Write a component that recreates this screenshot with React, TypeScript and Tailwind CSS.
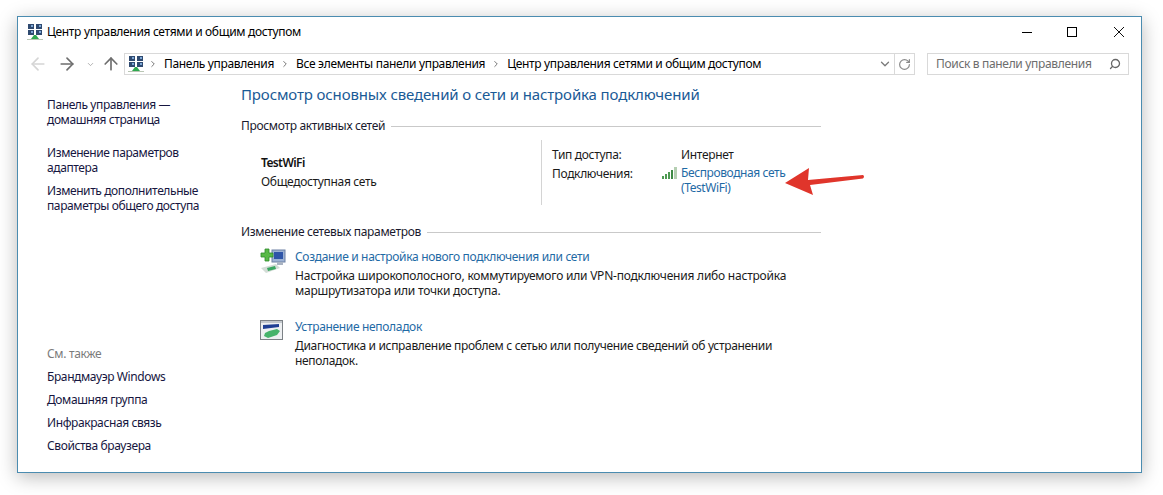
import { ArrowLeft, ArrowRight, ArrowUp, ChevronDown, ChevronRight, RotateCw, Search } from 'lucide-react'

function NetworkIcon() {
  return (
    <svg width="16" height="16" viewBox="0 0 16 16" className="shrink-0">
      <rect x="1" y="0" width="6" height="5" fill="#2f4a70" />
      <rect x="9" y="0" width="6" height="5" fill="#2f4a70" />
      <rect x="4" y="1" width="2" height="2" fill="#7fa8d6" />
      <rect x="12" y="1" width="2" height="2" fill="#7fa8d6" />
      <rect x="1" y="6" width="6" height="5" fill="#2f4a70" />
      <rect x="9" y="6" width="6" height="5" fill="#2f4a70" />
      <rect x="4" y="7" width="2" height="2" fill="#7fa8d6" />
      <rect x="12" y="7" width="2" height="2" fill="#7fa8d6" />
      <path d="M4 15 L7 11 H9 L12 15 Z" fill="#2fa84f" />
      <rect x="0" y="15" width="16" height="1" fill="#b9c6b4" />
    </svg>
  )
}

function SignalIcon() {
  return (
    <svg width="16" height="12" viewBox="0 0 16 12" className="shrink-0">
      <rect x="0" y="9" width="2" height="3" fill="#4e9a52" />
      <rect x="3" y="7" width="2" height="5" fill="#4e9a52" />
      <rect x="6" y="5" width="2" height="7" fill="#4e9a52" />
      <rect x="9" y="3" width="2" height="9" fill="#3f8a45" />
      <rect x="12" y="0" width="3" height="12" fill="#b5cfb2" />
    </svg>
  )
}

function AddConnectionIcon() {
  return (
    <svg width="26" height="26" viewBox="0 0 26 26" className="shrink-0">
      <rect x="12" y="2" width="13" height="12" fill="#9db2d4" stroke="#6d80a3" />
      <rect x="14" y="4" width="9" height="7" fill="#2f55a8" />
      <rect x="17" y="14" width="6" height="3" fill="#a9b3c2" />
      <path d="M5 1 H9 V5 H13 V9 H9 V13 H5 V9 H1 V5 H5 Z" fill="#59b947" stroke="#2f8a2c" strokeWidth="0.8" />
      <path d="M1 20 L16 16 L20 20 L6 25 Z" fill="#d3dcd6" />
      <path d="M7 20 L15 18 L16 21 L8 23 Z" fill="#3aa761" />
    </svg>
  )
}

function TroubleshootIcon() {
  return (
    <svg width="23" height="20" viewBox="0 0 23 20" className="shrink-0">
      <rect x="0.5" y="0.5" width="22" height="19" fill="#eef0f2" stroke="#7c8186" />
      <rect x="1" y="1" width="21" height="2" fill="#c4c8cc" />
      <path d="M3 5 L19 4 V7 L3 9 Z" fill="#1f3f94" />
      <path d="M5 13 L9 11 L17 9 L20 11 L17 15 L8 18 L4 16 Z" fill="#46b36b" />
    </svg>
  )
}

function RedArrow() {
  return (
    <svg
      width="82"
      height="32"
      viewBox="0 0 82 32"
      className="absolute left-[766px] top-[149px]"
    >
      <path
        d="M1 17 L25 2 L24 14 L79 9 Q81 10.500 79 12.500 L26 19 L29 29 Z"
        fill="#e0352b"
      />
    </svg>
  )
}

function SectionHeading({ title }: { title: string }) {
  return (
    <div className="flex h-[16px] items-center gap-[6px]">
      <span className="whitespace-nowrap text-[#1a1a2e]">{title}</span>
      <div className="h-px flex-1 bg-[#c9c9c9]" />
    </div>
  )
}

const sideLinkClass = 'block text-[#16163f] leading-[15px] tracking-[-0.4px]'

export default function App() {
  return (
    <div className="h-[495px] w-[1163px] overflow-hidden bg-white pl-[17px] pt-[16px] font-['Noto_Sans',sans-serif] text-[12px] tracking-[-0.33px] text-[#1a1a1a]">
      <div className="relative flex h-[457px] w-[1125px] flex-col border border-[#4b8cb0] bg-white shadow-[0_4px_18px_rgba(0,0,0,0.28)]">
        <div className="flex h-[30px] shrink-0 items-center pl-[9px]">
          <NetworkIcon />
          <span className="ml-[4px] text-[12px] text-black">Центр управления сетями и общим доступом</span>
          <div className="ml-auto flex items-center text-black">
            <div className="mr-[35px] h-px w-[10px] bg-black" />
            <div className="mr-[36px] h-[10px] w-[10px] border border-black" />
            <svg width="12" height="12" viewBox="0 0 12 12" className="mr-[16px]">
              <path d="M1 1 L11 11 M11 1 L1 11" stroke="#111" strokeWidth="1" />
            </svg>
          </div>
        </div>

        <div className="mt-[6px] flex h-[22px] shrink-0 items-center">
          <ArrowLeft size={20} strokeWidth={2} className="ml-[10px] text-[#d5d5d5]" />
          <ArrowRight size={20} strokeWidth={2} className="ml-[9px] text-[#6e6e6e]" />
          <ChevronDown size={9} strokeWidth={2} className="ml-[9px] text-[#999]" />
          <ArrowUp size={20} strokeWidth={2} className="ml-[6px] text-[#6e6e6e]" />
          <div className="ml-[3px] flex h-[22px] w-[791px] items-center border border-[#d9d9d9]">
            <div className="ml-[3px]"><NetworkIcon /></div>
            <ChevronRight size={10} strokeWidth={2.4} className="ml-[4px] text-[#777]" />
            <span className="ml-[6px] text-black">Панель управления</span>
            <ChevronRight size={10} strokeWidth={2.4} className="ml-[6px] text-[#777]" />
            <span className="ml-[6px] text-black">Все элементы панели управления</span>
            <ChevronRight size={10} strokeWidth={2.4} className="ml-[6px] text-[#777]" />
            <span className="ml-[6px] text-black">Центр управления сетями и общим доступом</span>
            <ChevronDown size={14} strokeWidth={2.2} className="ml-auto mr-[2px] text-[#7a7a7a]" />
            <div className="flex h-full w-[20px] items-center justify-center border-l border-[#d9d9d9]">
              <RotateCw size={13} strokeWidth={2.2} className="text-[#8a8a8a]" />
            </div>
          </div>
          <div className="ml-[12px] flex h-[22px] w-[202px] items-center border border-[#d9d9d9] pl-[8px] text-[#6d6d6d]">
            <span>Поиск в панели управления</span>
            <Search size={12} strokeWidth={2.6} className="ml-auto mr-[7px] -scale-x-100 text-[#666]" />
          </div>
        </div>

        <div className="flex min-h-0 flex-1">
          <aside className="flex w-[223px] shrink-0 flex-col pl-[29px] pt-[22px]">
            <a className={sideLinkClass}>Панель управления —<br />домашняя страница</a>
            <a className={`${sideLinkClass} mt-[18px]`}>Изменение параметров<br />адаптера</a>
            <a className={`${sideLinkClass} mt-[8px]`}>Изменить дополнительные<br />параметры общего доступа</a>
            <div className="mt-auto flex flex-col pb-[19px]">
              <span className="leading-[15px] text-[#7b7b7b]">См. также</span>
              <a className={`${sideLinkClass} mt-[8px]`}>Брандмауэр Windows</a>
              <a className={`${sideLinkClass} mt-[8px]`}>Домашняя группа</a>
              <a className={`${sideLinkClass} mt-[8px]`}>Инфракрасная связь</a>
              <a className={`${sideLinkClass} mt-[8px]`}>Свойства браузера</a>
            </div>
          </aside>

          <main className="w-[580px] shrink-0 pt-[9px]">
            <h1 className="text-[15px] leading-[20px] tracking-[-0.13px] text-[#1a5a96]">
              Просмотр основных сведений о сети и настройка подключений
            </h1>
            <div className="mt-[14px]">
              <SectionHeading title="Просмотр активных сетей" />
            </div>
            <div className="mt-[6px] flex h-[65px]">
              <div className="w-[301px] border-r border-[#d4d4d4] pl-[20px] pt-[14px]">
                <div className="font-semibold leading-[17px] tracking-[-0.6px] text-[#111]">TestWiFi</div>
                <div className="mt-[3px] leading-[16px]">Общедоступная сеть</div>
              </div>
              <div className="grid grid-cols-[129px_1fr] grid-rows-[19px_auto] pl-[10px] pt-[6px]">
                <span>Тип доступа:</span>
                <span>Интернет</span>
                <span>Подключения:</span>
                <div className="flex">
                  <div className="-ml-[19px] mr-[3px] mt-[2px]"><SignalIcon /></div>
                  <a className="leading-[15px] tracking-[-0.4px] text-[#1f6aa5]">Беспроводная сеть<br />(TestWiFi)</a>
                </div>
              </div>
            </div>
            <div className="mt-[19px]">
              <SectionHeading title="Изменение сетевых параметров" />
            </div>
            <div className="mt-[8px] flex pl-[19px]">
              <AddConnectionIcon />
              <div className="ml-[9px] w-[510px]">
                <a className="leading-[16px] text-[#1f6aa5]">Создание и настройка нового подключения или сети</a>
                <p className="mt-[2px] leading-[15px] tracking-[-0.22px]">
                  Настройка широкополосного, коммутируемого или VPN-подключения либо настройка маршрутизатора или точки доступа.
                </p>
              </div>
            </div>
            <div className="mt-[20px] flex pl-[19px]">
              <div className="mt-[2px]"><TroubleshootIcon /></div>
              <div className="ml-[12px] w-[510px]">
                <a className="leading-[16px] text-[#1f6aa5]">Устранение неполадок</a>
                <p className="mt-[2px] leading-[15px]">
                  Диагностика и исправление проблем с сетью или получение сведений об устранении неполадок.
                </p>
              </div>
            </div>
          </main>
        </div>
        <RedArrow />
      </div>
    </div>
  )
}
